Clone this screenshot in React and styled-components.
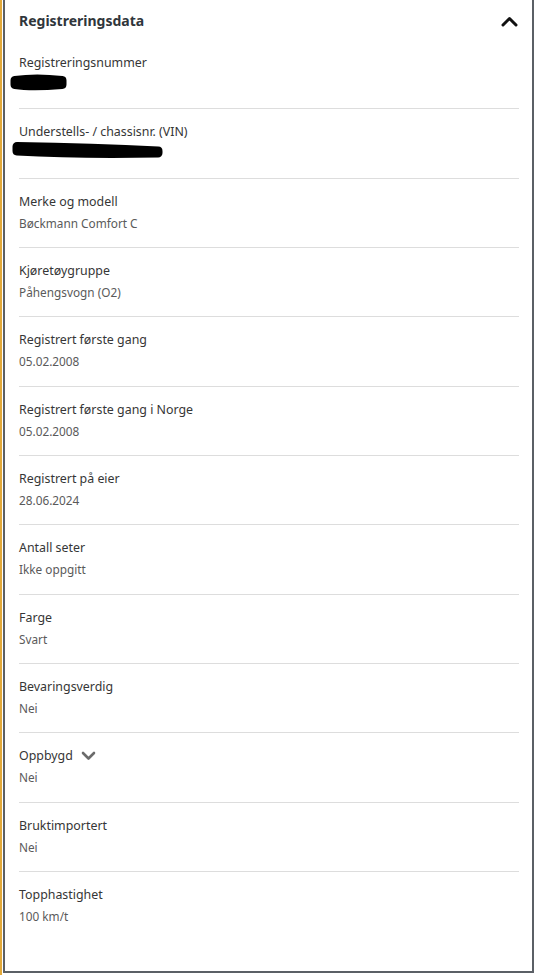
import React from "react";
import styled, { createGlobalStyle } from "styled-components";

const GlobalStyle = createGlobalStyle`
  html, body {
    margin: 0;
    padding: 0;
    background: #fff;
  }
  body {
    font-family: "Noto Sans", "Liberation Sans", Arial, sans-serif;
  }
`;

const Frame = styled.div`
  display: flex;
  width: 536px;
  height: 975px;
  box-sizing: border-box;
  border-left: 2px solid #e2a93b;
  padding: 0 2px 2px 1px;
  background: #fff;
`;

const Panel = styled.section`
  flex: 1;
  display: flex;
  flex-direction: column;
  border: 2px solid #5b6066;
  border-top: none;
  padding: 0 13px 0 14px;
  box-sizing: border-box;
`;

const Header = styled.div`
  display: flex;
  align-items: center;
  justify-content: space-between;
  height: 40px;
  padding-top: 2px;
  box-sizing: border-box;
`;

const Title = styled.h2`
  margin: 0;
  font-size: 14px;
  font-weight: 700;
  color: #30363b;
  line-height: 22px;
`;

const ToggleIcon = styled.svg`
  width: 17px;
  height: 11px;
  margin-right: 1px;
`;

const Row = styled.div`
  flex: none;
  padding: 13px 0 14.33px;
  border-top: ${(p) => (p.$first ? "none" : "1px solid #dddddd")};
`;

const Label = styled.div`
  display: flex;
  align-items: center;
  gap: 8px;
  height: 20px;
  font-size: 12.4px;
  line-height: 20px;
  color: #363636;
`;

const Value = styled.div`
  display: flow-root;
  margin-top: 1px;
  font-size: 11.8px;
  line-height: 20px;
  color: #5a5a5a;
  height: 20px;
`;

const Redaction = styled.svg`
  display: block;
  overflow: visible;
  transform: translate(${(p) => p.$dx}px, ${(p) => p.$dy}px);
`;

const InfoChevron = styled.svg`
  width: 15px;
  height: 10px;
`;

const rows = [
  { label: "Registreringsnummer", redact: "short" },
  { label: "Understells- / chassisnr. (VIN)", redact: "long" },
  { label: "Merke og modell", value: "Bøckmann Comfort C" },
  { label: "Kjøretøygruppe", value: "Påhengsvogn (O2)" },
  { label: "Registrert første gang", value: "05.02.2008" },
  { label: "Registrert første gang i Norge", value: "05.02.2008" },
  { label: "Registrert på eier", value: "28.06.2024" },
  { label: "Antall seter", value: "Ikke oppgitt" },
  { label: "Farge", value: "Svart" },
  { label: "Bevaringsverdig", value: "Nei" },
  { label: "Oppbygd", value: "Nei", more: true },
  { label: "Bruktimportert", value: "Nei" },
  { label: "Topphastighet", value: "100 km/t" },
];

const ShortRedaction = () => (
  <Redaction $dx={-10} $dy={-2} width="60" height="20" viewBox="0 0 60 20">
    <path
      d="M6 8.5 C 20 6.5, 40 7, 53 8.5 L 53 12.5 C 40 13.5, 20 14.5, 6 12.5 Z"
      fill="#000"
      stroke="#000"
      strokeWidth="9"
      strokeLinejoin="round"
    />
  </Redaction>
);

const LongRedaction = () => (
  <Redaction $dx={-7} $dy={0} width="152" height="20" viewBox="0 0 152 20">
    <path
      d="M5 3.5 C 40 4, 90 5, 146 8 L 146 10 C 90 11, 40 10, 5 8 Z"
      fill="#000"
      stroke="#000"
      strokeWidth="9"
      strokeLinejoin="round"
    />
  </Redaction>
);

const App = () => (
  <>
    <GlobalStyle />
    <Frame>
      <Panel>
        <Header>
          <Title>Registreringsdata</Title>
          <ToggleIcon viewBox="0 0 17 11">
            <path
              d="M2 9 L8.5 2.5 L15 9"
              fill="none"
              stroke="#111"
              strokeWidth="3"
              strokeLinecap="round"
              strokeLinejoin="round"
            />
          </ToggleIcon>
        </Header>
        {rows.map((r, i) => (
          <Row key={r.label} $first={i === 0}>
            <Label>
              {r.label}
              {r.more && (
                <InfoChevron viewBox="0 0 15 10">
                  <path
                    d="M2 2 L7.5 7.5 L13 2"
                    fill="none"
                    stroke="#6b6b6b"
                    strokeWidth="2.6"
                    strokeLinecap="round"
                    strokeLinejoin="round"
                  />
                </InfoChevron>
              )}
            </Label>
            <Value>
              {r.redact === "short" && <ShortRedaction />}
              {r.redact === "long" && <LongRedaction />}
              {r.value}
            </Value>
          </Row>
        ))}
      </Panel>
    </Frame>
  </>
);

export default App;
